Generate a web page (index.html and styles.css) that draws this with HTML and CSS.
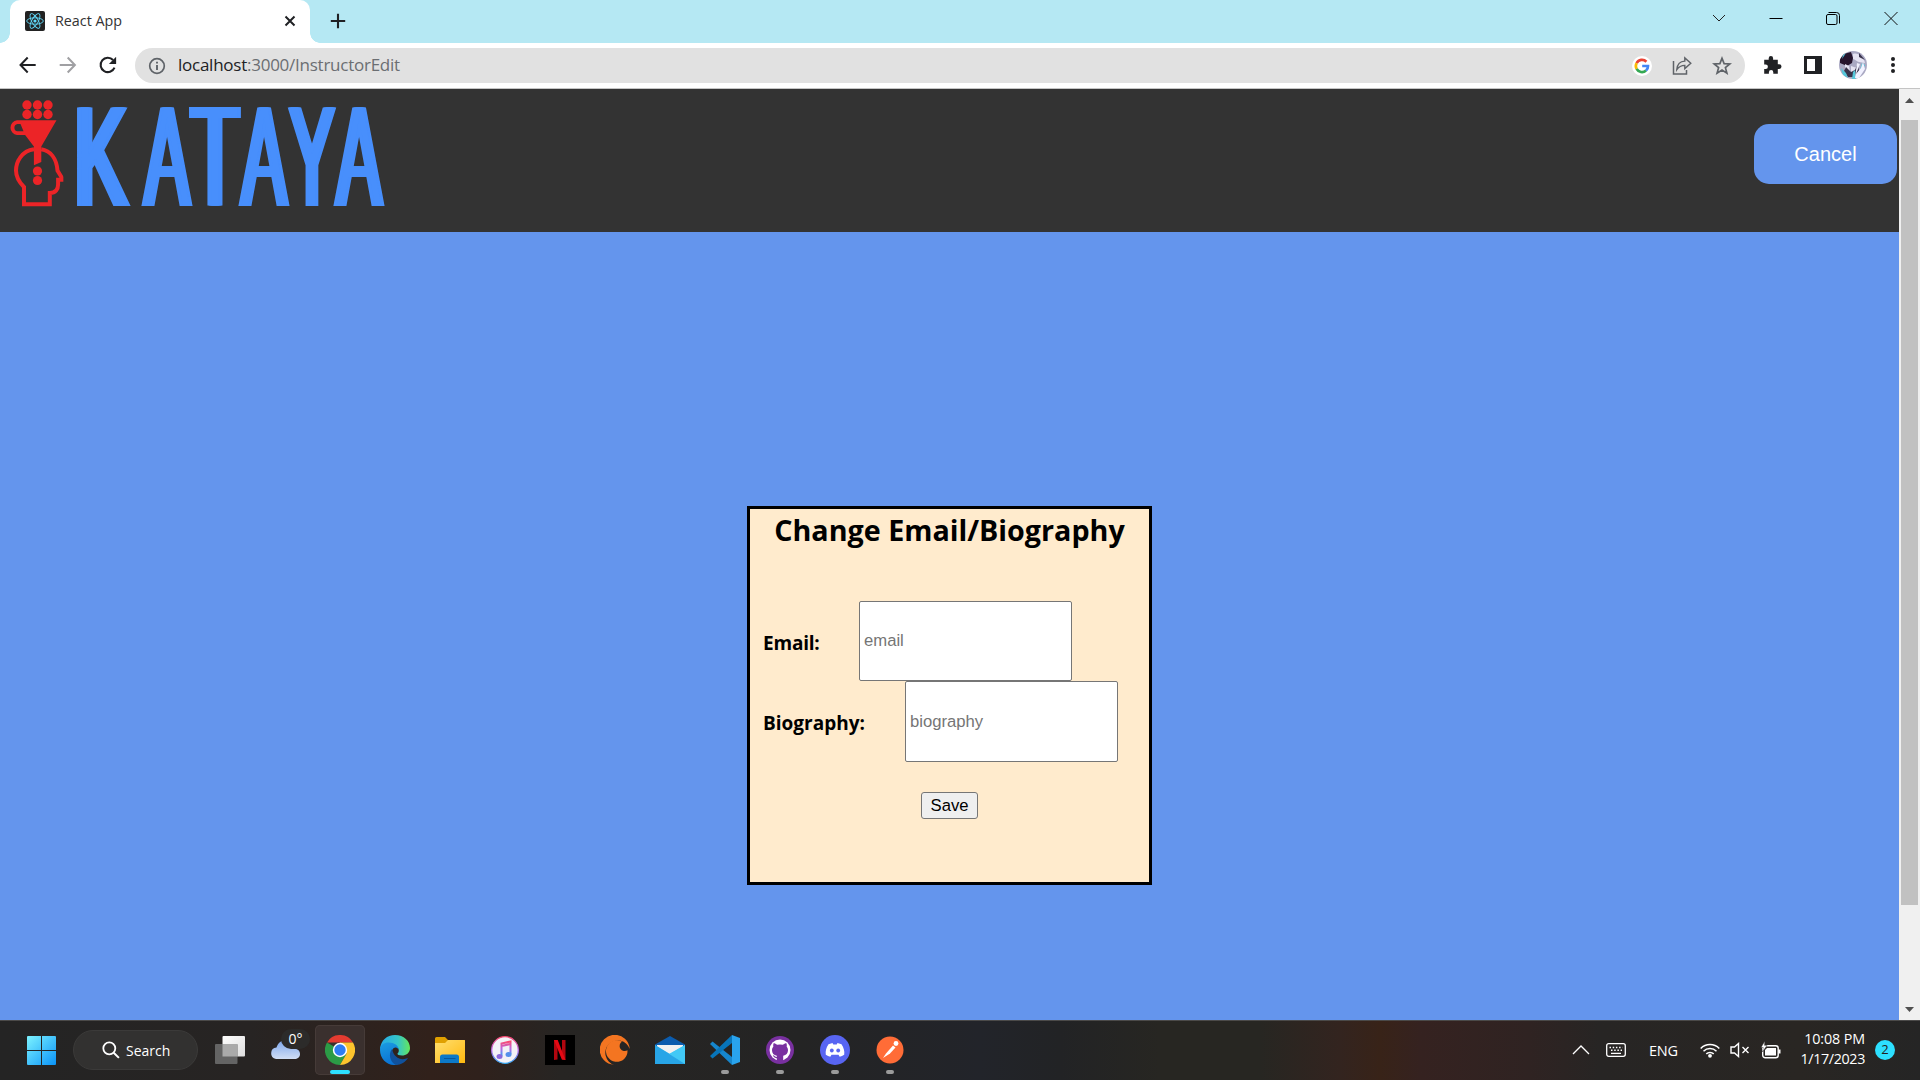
FILE: index.html
```html
<!DOCTYPE html>
<html lang="en">
<head>
<meta charset="utf-8">
<title>React App</title>
<link rel="stylesheet" href="styles.css">
</head>
<body>
<div class="desktop">
  <div class="tabstrip">
    <div class="tab">
      <svg class="favicon" viewBox="0 0 20 20"><rect width="20" height="20" rx="2" fill="#222"/><g fill="none" stroke="#61dafb" stroke-width=".9"><ellipse cx="10" cy="10" rx="8.3" ry="3.2"/><ellipse cx="10" cy="10" rx="8.3" ry="3.2" transform="rotate(60 10 10)"/><ellipse cx="10" cy="10" rx="8.3" ry="3.2" transform="rotate(120 10 10)"/></g><circle cx="10" cy="10" r="1.6" fill="#61dafb"/></svg>
      <span class="tab-title">React App</span>
      <svg class="tab-close" viewBox="0 0 12 12"><path d="M1.5 1.5l9 9M10.5 1.5l-9 9" stroke="#202124" stroke-width="2"/></svg>
    </div>
    <svg class="new-tab" viewBox="0 0 16 16"><path d="M8 .8v14.4M.8 8h14.4" stroke="#202124" stroke-width="2.1"/></svg>
    <div class="window-controls">
      <svg viewBox="0 0 16 16"><path d="M2 5l6 6 6-6" fill="none" stroke="#222" stroke-width="1"/></svg>
      <svg viewBox="0 0 16 16"><path d="M1.5 8.5h13" stroke="#000" stroke-width="1"/></svg>
      <svg viewBox="0 0 16 16"><rect x="1.5" y="4.5" width="10.5" height="10" rx="1.5" fill="none" stroke="#000"/><path d="M3.5 2.5h8a3 3 0 0 1 3 3v8" fill="none" stroke="#000"/></svg>
      <svg viewBox="0 0 16 16"><path d="M1.5 2l13 13M14.5 2l-13 13" stroke="#111" stroke-width="1"/></svg>
    </div>
  </div>

  <div class="toolbar">
    <div class="nav">
      <svg viewBox="0 0 20 20"><path d="M18 10H3M10 2.5L2.8 10l7.2 7.5" fill="none" stroke="#202124" stroke-width="2"/></svg>
      <svg viewBox="0 0 20 20"><path d="M2 10h15M10 2.5l7.2 7.5-7.2 7.5" fill="none" stroke="#a0a0a3" stroke-width="2"/></svg>
      <svg viewBox="0 0 20 20"><path d="M16.8 12.6A7.2 7.2 0 1 1 15.4 5" fill="none" stroke="#202124" stroke-width="2.1"/><path d="M18.4 1.8v7.2h-7.2z" fill="#202124"/></svg>
    </div>
    <div class="omnibox">
      <svg class="info" viewBox="0 0 18 18"><circle cx="9" cy="9" r="7.3" fill="none" stroke="#5f6368" stroke-width="1.7"/><path d="M9 8v5M9 4.8v1.8" stroke="#5f6368" stroke-width="1.9"/></svg>
      <span class="url"><span class="host">localhost</span>:3000/InstructorEdit</span>
      <div class="omni-actions">
        <svg viewBox="0 0 20 20"><circle cx="10" cy="10" r="10" fill="#fff"/><g fill="none" stroke-width="2.7"><path d="M14.4 5.7A6.1 6.1 0 0 0 4.6 7.1" stroke="#ea4335"/><path d="M4.6 7.1a6.1 6.1 0 0 0 0 5.8" stroke="#fbbc05"/><path d="M4.6 12.9a6.1 6.1 0 0 0 9.4 1.7" stroke="#34a853"/><path d="M14 14.6A6 6 0 0 0 16 10h-5.8" stroke="#4285f4"/></g></svg>
        <svg viewBox="0 0 20 20"><path d="M1.5 5v13h13v-4" fill="none" stroke="#5f6368" stroke-width="1.5"/><path d="M4.8 13.6C5.2 8.5 8 5.3 12.8 5.1V1.9l6 5.4-6 5.3V9.4c-3.6 0-6 1.3-8 4.2z" fill="none" stroke="#5f6368" stroke-width="1.4"/></svg>
        <svg viewBox="0 0 20 20"><path d="M10 2.3l2.1 5.3 5.7.4-4.4 3.6 1.5 5.5-4.9-3.1-4.9 3.1 1.5-5.5L2.2 8l5.7-.4z" fill="none" stroke="#5f6368" stroke-width="1.7"/></svg>
      </div>
    </div>
    <div class="extensions">
      <svg viewBox="0 0 20 20"><path d="M1.2 4.8h4.5V3.3a2.2 2.2 0 0 1 4.4 0v1.5h4.7v4.5h1.4a2.3 2.3 0 0 1 0 4.6h-1.4v4.8h-4.5v-1.5a2.2 2.2 0 0 0-4.4 0v1.5H1.2v-4.8h1.5a2.2 2.2 0 0 0 0-4.4H1.2z" fill="#202124"/></svg>
      <svg viewBox="0 0 20 20"><path fill-rule="evenodd" d="M1 1h18v18H1zM4 4v12h8V4z" fill="#202124"/></svg>
      <svg class="avatar" viewBox="0 0 28 28"><defs><clipPath id="face"><circle cx="14" cy="14" r="14"/></clipPath></defs><g clip-path="url(#face)"><path fill="#aaa9c3" d="M0 0h28v28H0z"/><path fill="#26152d" d="M1 4L12 1l2 6-1 5-5 3-7-3z"/><path fill="#e5e3f2" d="M14 3c5-2 11 4 12 9l-6-1c-2 0-4-3-6-3zM6 13l4 2 1 6-5-3zM12 15l6 2-6 5z"/><path fill="#39334b" d="M7 16l5 5 4-2 3-7 1 8-4 6H9l-4-6zM20 2l6 7-6-3z"/><path fill="#54c7da" d="M2 17l5 5 2 5-5-3zM14 21l2-2 1 9h-4zM23 12l3 2-4 9-3 3zM4 4l3-2-4 6z"/><path fill="#f1f1ff" d="M18 12l3 1-4 10 5-6 2-6 2 7-6 9h-4z"/></g></svg>
      <svg viewBox="0 0 20 20"><g fill="#202124"><circle cx="10" cy="4" r="2"/><circle cx="10" cy="10" r="2"/><circle cx="10" cy="16" r="2"/></g></svg>
    </div>
  </div>

  <div class="viewport">
    <div class="page">
      <header class="site-header">
        <div class="brand">
          <svg class="brand-mark" viewBox="0 0 54 108"><g fill="#ec2427"><circle cx="17.5" cy="5" r="4.7"/><circle cx="28" cy="5" r="4.7"/><circle cx="38.5" cy="5" r="4.7"/><circle cx="17.5" cy="14.5" r="4.7"/><circle cx="28" cy="14.5" r="4.7"/><circle cx="38.5" cy="14.5" r="4.7"/><path d="M7 20.3h40L31.8 46.5V62l-7.4 3.2V46.5L15.6 35H7.5a7.4 7.4 0 0 1 0-14.7zM8 24a3.7 3.7 0 0 0 0 7.3h6L11 24z" fill-rule="evenodd"/><circle cx="28" cy="71" r="4.6"/><circle cx="28" cy="80.5" r="4.6"/></g><path d="M24.500 49.300C12 51 6.500 62 6.500 70.500c0 7 3.500 12 8 16.500v17.300h25.800V93c6 0 8.300-4 8.300-8.500V79.800h3.600v-2.300l-4.200-7c-1-12-7-19.800-16.300-21.200" fill="none" stroke="#ec2427" stroke-width="4"/></svg>
          <div class="wordmark" aria-label="KATAYA"><span class="glyph k">K</span><span class="glyph a">A</span><span class="glyph t">T</span><span class="glyph a2">A</span><span class="glyph y">Y</span><span class="glyph a3">A</span></div>
        </div>
        <button class="cancel">Cancel</button>
      </header>
      <main class="content">
        <form class="card">
          <h1>Change Email/Biography</h1>
          <div class="field"><label for="email">Email:</label><input id="email" placeholder="email"></div>
          <div class="field bio"><label for="bio">Biography:</label><input id="bio" placeholder="biography"></div>
          <button type="button" class="save">Save</button>
        </form>
      </main>
    </div>
    <div class="scrollbar">
      <svg viewBox="0 0 9 5"><path d="M0 5l4.5-5L9 5z" fill="#505050"/></svg>
      <div class="thumb"></div>
      <svg viewBox="0 0 9 5"><path d="M0 0l4.5 5L9 0z" fill="#505050"/></svg>
    </div>
  </div>

  <div class="taskbar">
    <svg class="start" viewBox="0 0 29 29"><defs><linearGradient id="win" x2="1" y2="1" gradientUnits="userSpaceOnUse" x1="0" y1="0" gradientTransform="scale(29)"><stop stop-color="#7df3ff"/><stop offset="1" stop-color="#0a93f8"/></linearGradient></defs><path fill="url(#win)" d="M1 0h13v14H0V1a1 1 0 0 1 1-1zM15 0h13a1 1 0 0 1 1 1v13H15zM0 15h14v14H1a1 1 0 0 1-1-1zM15 15h14v13a1 1 0 0 1-1 1H15z"/></svg>
    <div class="search">
      <svg viewBox="0 0 18 18"><circle cx="7.3" cy="7.3" r="6" fill="none" stroke="#fff" stroke-width="1.8"/><path d="M11.7 11.7l5.2 5.2" stroke="#fff" stroke-width="2"/></svg>
      <span>Search</span>
    </div>
    <div class="apps">
      <div class="app"><svg viewBox="0 0 30 30"><defs><linearGradient id="tv" x2="1" y2="1"><stop stop-color="#fff"/><stop offset="1" stop-color="#ddd"/></linearGradient></defs><rect x="7.5" y="1" width="22.5" height="20.5" rx="1" fill="url(#tv)"/><rect x="0" y="9" width="22.5" height="20" rx="1" fill="#646464"/><path d="M7.5 9h15v12.5h-15z" fill="#aaa"/></svg></div>
      <div class="app weather"><svg viewBox="0 0 30 30"><defs><linearGradient id="cloud" x2="0" y2="1"><stop stop-color="#7ea7ec"/><stop offset="1" stop-color="#d1def5"/></linearGradient></defs><path d="M6 24a5.8 5.8 0 0 1 .5-11.5C8 8 11 5.5 15 5.5c5 0 8 3.5 8.5 8 4 .2 6.5 2.2 6.5 5.4S27.500 24 24.500 24z" fill="url(#cloud)"/></svg><span class="temp">0°</span></div>
      <div class="app active"><svg viewBox="0 0 30 30"><path d="M2 7.500A15 15 0 0 1 28 7.500H15z" fill="#e43b30"/><path d="M2 7.500A15 15 0 0 0 15 30l6.500-11.200L15 15z" fill="#2b9b46"/><path d="M28 7.500A15 15 0 0 1 15 30l6.500-11.300L15 7.500z" fill="#fdc42d"/><circle cx="15" cy="15" r="7.200" fill="#fff"/><circle cx="15" cy="15" r="5.700" fill="#2e7df2"/></svg></div>
      <div class="app"><svg viewBox="0 0 30 30"><defs><linearGradient id="e1"><stop stop-color="#25a9e9"/><stop offset=".6" stop-color="#35c5c8"/><stop offset="1" stop-color="#65e75b"/></linearGradient><linearGradient id="e2" x2=".4" y2="1"><stop stop-color="#1b9de2"/><stop offset="1" stop-color="#0a72d4"/></linearGradient></defs><path d="M0 14C1 5 7 0 15 0c9 0 15 6 15 13 0 5-4 7.500-8 7.500-3 0-5-1-4.500-2 1.500-1.500 1.500-3 1-4.500C17 9 7 7 0 14z" fill="url(#e1)"/><path d="M0 15C0 10 4 7.500 8.500 7.500c6 0 10 3 10.200 7C15 10 11 14 12 19c1 4.500 5 7.500 10 7.500-2 2-4.500 3.500-8 3.500C6 30 0 23 0 15z" fill="url(#e2)"/><path d="M12 14c-4 5-2 13 4 16 5 0 9.500-3 12-7-7 3-14 0-16-9z" fill="#10519c"/></svg></div>
      <div class="app"><svg viewBox="0 0 30 30"><defs><linearGradient id="fold" x2="1" y2="1"><stop stop-color="#ffdf70"/><stop offset="1" stop-color="#ffb90f"/></linearGradient></defs><path d="M0 3.500A1.500 1.500 0 0 1 1.500 2H10l3 3h17v10H0z" fill="#e0a000"/><path d="M0 8h10l3-3h16a1 1 0 0 1 1 1v22H0z" fill="url(#fold)"/><path d="M5 28v-6a2.500 2.500 0 0 1 2.500-2.500h14A2.500 2.500 0 0 1 24 22v6z" fill="#0c79c8"/><path d="M9 23.500h11.500" stroke="#07579c"/></svg></div>
      <div class="app"><svg viewBox="0 0 30 30"><defs><linearGradient id="mus" x2="0" y2="1"><stop stop-color="#fb4a72"/><stop offset=".5" stop-color="#b966e6"/><stop offset="1" stop-color="#31a8f4"/></linearGradient></defs><circle cx="15" cy="15" r="13.300" fill="#f3f2f7" stroke="url(#mus)" stroke-width="1.300"/><path d="M11.500 21V8.500l9-2V19M11.500 11l9-2" fill="none" stroke="url(#mus)" stroke-width="2"/><ellipse cx="9.500" cy="21.500" rx="3" ry="2.500" fill="#8b68dc"/><ellipse cx="18.500" cy="19.500" rx="3" ry="2.500" fill="#5590eb"/></svg></div>
      <div class="app"><svg viewBox="0 0 30 30"><path d="M0 0h30v30H0z"/><path d="M9 5h3.500v19.500L9 25zM17 5h3.500v20l-3.500-.5z" fill="#b1060f"/><path d="M9 5h3.700l7.800 20-3.700-.4z" fill="#e50914"/></svg></div>
      <div class="app"><svg viewBox="0 0 30 30"><path d="M14 29.800A15 15 0 1 1 29.700 14 12.500 12.500 0 1 0 14 29.800z" fill="#f47521"/><path d="M22 6.600a4.500 4.500 0 0 0 5.500 8.700A10.800 10.800 0 1 1 22 6.600z" fill="#f47521"/></svg></div>
      <div class="app"><svg viewBox="0 0 30 30"><path d="M0 9.500L15 1l15 8.500V15H0z" fill="#0b5cae"/><path d="M2 10h26v10H2z" fill="#f1f1f1"/><path d="M0 10l15 9 15-9v19H0z" fill="#39b9f1"/><path d="M30 10L13 19.500 28 29h2z" fill="#42c9f6"/><path d="M0 10l30 19H0z" fill="#28a5e7"/></svg></div>
      <div class="app running"><svg viewBox="0 0 30 30"><path d="M0 9l2.500-2.500L22 22v8z" fill="#1686cd"/><path d="M0 21l2.500 2.500L22 8V0z" fill="#0875ba"/><path d="M22 0l8 3v24l-8 3z" fill="#29a3ed"/></svg></div>
      <div class="app running"><svg viewBox="0 0 30 30"><circle cx="15" cy="15" r="14" fill="#7930a0"/><circle cx="15" cy="15" r="10.500" fill="#fff"/><path d="M11.800 26v-5.200c-3-.5-4.800-2.500-4.800-5.500 0-1.400.5-2.600 1.300-3.500-.3-1.300-.1-2.500.3-3.500 1.300 0 2.500.7 3.500 1.500a13 13 0 0 1 5.800 0c1-.8 2.200-1.500 3.500-1.500.4 1 .6 2.200.3 3.500.8.900 1.300 2.100 1.300 3.500 0 3-1.800 5-4.800 5.500V26z" fill="#7930a0"/><path d="M12.300 22.500c-2 .5-3-.5-4-2" fill="none" stroke="#7930a0" stroke-width="1.200"/></svg></div>
      <div class="app running"><svg viewBox="0 0 30 30"><circle cx="15" cy="15" r="15" fill="#5865f2"/><path d="M8.500 9.300l4-1.300.8 1.400h3.400l.8-1.400 4 1.300c2.200 3.300 3.300 6.900 2.700 10.500-1.500 1.100-3 1.700-4.500 2l-1.200-2h-7l-1.200 2c-1.500-.3-3-1-4.500-2-.5-3.600.4-7.200 2.700-10.500z" fill="#fff"/><circle cx="11.800" cy="15.500" r="1.900" fill="#5865f2"/><circle cx="18.200" cy="15.500" r="1.900" fill="#5865f2"/></svg></div>
      <div class="app running"><svg viewBox="0 0 30 30"><circle cx="15" cy="15" r="13.500" fill="#ff6c37"/><circle cx="21" cy="8.500" r="2.400" fill="#fff"/><path d="M18 10.500l2.500 2-5.500 6-7 4.500 3-4.500z" fill="#fff"/></svg></div>
    </div>
    <div class="tray">
      <svg class="chev" viewBox="0 0 18 18"><path d="M1 13l8-8 8 8" fill="none" stroke="#fff" stroke-width="1.300"/></svg>
      <svg class="kbd" viewBox="0 0 20 14"><rect x=".7" y=".7" width="18.600" height="12.600" rx="2" fill="none" stroke="#fff" stroke-width="1.300"/><path d="M3.500 4.500h13M5 7.300h11" stroke="#fff" stroke-width="1.500" stroke-dasharray="1.500 1.700"/><path d="M5 10.400h10" stroke="#fff" stroke-width="1.300"/></svg>
      <span class="lang">ENG</span>
      <svg class="wifi" viewBox="0 0 20 16"><g fill="none" stroke="#fff" stroke-width="1.500"><path d="M.7 6.500a13 13 0 0 1 18.600 0M3.500 9.300a9.200 9.200 0 0 1 13 0M6.300 11.900a5.300 5.300 0 0 1 7.400 0"/></g><circle cx="10" cy="13.800" r="1.900" fill="#fff"/></svg>
      <svg class="vol" viewBox="0 0 20 16"><path d="M1 5h3.500L8.500 1.500v13L4.500 11H1z" fill="none" stroke="#fff" stroke-width="1.400"/><path d="M12.500 5l6 6M18.500 5l-6 6" stroke="#fff" stroke-width="1.400"/></svg>
      <svg class="batt" viewBox="0 0 20 18"><rect x="1.700" y="4.700" width="15.500" height="12" rx="2.500" fill="none" stroke="#fff" stroke-width="1.400"/><path d="M4 9l2-2h9v7.500H4zM17.500 8.500h2v4h-2z" fill="#fff"/><path d="M3.800 0L0 6.500h2.200L1.500 11l4.500-6.500H3.600z" fill="#fff" stroke="#272524" stroke-width=".5"/></svg>
      <div class="clock"><span class="time">10:08 PM</span><span class="date">1/17/2023</span></div>
      <span class="badge">2</span>
    </div>
  </div>
</div>
</body>
</html>
```
FILE: styles.css
```css
* { box-sizing: border-box; }
body { margin: 0; overflow: hidden; font-family: "Open Sans", "Noto Sans", sans-serif; }
svg { display: block; flex: none; }
.desktop { width: 1920px; height: 1080px; display: flex; flex-direction: column; }

/* browser frame */
.tabstrip { height: 43px; background: #b5e8f3; display: flex; padding-left: 10px; align-items: stretch; }
.tab { position: relative; width: 300px; background: #fff; border-radius: 10px 10px 0 0; display: flex; align-items: center; padding: 0 14px 1px 15px; }
.tab::before, .tab::after { content: ""; position: absolute; bottom: 0; width: 10px; height: 10px; }
.tab::before { left: -10px; background: radial-gradient(circle at 0 0, transparent 9.5px, #fff 10px); }
.tab::after { right: -10px; background: radial-gradient(circle at 100% 0, transparent 9.5px, #fff 10px); }
.favicon { width: 20px; height: 20px; }
.tab-title { margin: 0 0 2px 10px; font-size: 14.3px; color: #333; }
.tab-close { width: 12px; height: 12px; margin-left: auto; }
.new-tab { width: 16px; height: 16px; margin: 13px 0 0 19.5px; }
.window-controls { margin: 10px 21px 0 auto; display: flex; gap: 41px; }
.window-controls svg { width: 16px; height: 16px; }
.window-controls svg:nth-child(3) { margin-right: 1px; }
.toolbar { height: 46px; background: #fff; border-bottom: 1px solid #c4c4c4; display: flex; align-items: center; padding: 0 17px 1px; }
.nav { display: flex; gap: 20px; }
.nav svg { width: 20px; height: 20px; transform: translateX(.7px); }
.omnibox { width: 1610px; height: 35px; margin-left: 18px; border-radius: 18px; background: #e1e1e1; display: flex; align-items: center; padding: 0 13px; margin-top: 1px; }
.info { width: 18px; height: 18px; }
.url { margin: 0 0 2px 12px; font-size: 17px; letter-spacing: -.25px; color: #6b6e72; }
.host { color: #202124; }
.omni-actions { margin-left: auto; display: flex; gap: 20px; }
.omni-actions svg { width: 20px; height: 20px; }
.extensions { display: flex; align-items: center; gap: 20px; margin-left: 18px; }
.extensions svg { width: 20px; height: 20px; }
.extensions .avatar { width: 28px; height: 28px; margin: 0 -4px; }

/* page */
.viewport { height: 931px; display: flex; }
.page { width: 1899px; display: flex; flex-direction: column; background: #6495ed; }
.site-header { height: 143px; background: #333; display: flex; justify-content: space-between; padding-right: 2px; }
.brand { display: flex; padding: 11px 0 0 10px; }
.brand-mark { width: 54px; height: 108px; transform: translateX(-.5px); }
.wordmark { display: flex; height: 98px; margin: 8px 0 0 13px; color: #488ffc; font: 142px/98px "Liberation Sans", sans-serif; }
.glyph { width: 52px; display: flex; justify-content: center; text-shadow: -7px 0, -5px 0, -3px 0, -1px 0, 1px 0, 3px 0, 5px 0, 7px 0; transform: scaleX(.475); }
.k { transform: translateX(-2px) scaleX(.56); }
.a { margin-left: 12px; }
.t { margin-left: -4.5px; transform: scaleX(.55); }
.a2 { margin-left: -2.5px; }
.y { margin-left: -4px; }
.a3 { margin-left: -5.5px; }
.cancel { width: 143px; height: 60px; margin-top: 35px; border: 0; border-radius: 15px; background: #6495ed; color: #fff; font: 20px "Liberation Sans", sans-serif; padding: 0; }
.content { display: flex; justify-content: center; padding-top: 274px; }
.card { width: 405px; height: 379px; background: #ffebcd; border: 3px solid #000; display: flex; flex-direction: column; padding-left: 13px; }
.card h1 { margin: 0 13px 0 0; height: 92px; line-height: 42px; text-align: center; font-size: 28.7px; font-weight: 700; white-space: nowrap; }
.field { height: 80px; display: flex; align-items: center; gap: 40px; }
.field label { width: 56px; font-size: 19px; font-weight: 700; letter-spacing: -.2px; padding-top: 3px; white-space: nowrap; }
.bio label { width: 102px; letter-spacing: 0; }
.field input { width: 213px; height: 80px; border: 1px solid #767676; border-radius: 2px; padding: 1px 4px; background: #fff; font: 16.667px "Liberation Sans", sans-serif; }
.bio { height: 81px; }
.bio input { height: 81px; }
.field input::placeholder { color: #757575; }
.save { width: 57px; height: 27px; margin: 30px 13px 0 0; align-self: center; border: 1px solid #767676; border-radius: 3px; background: #efefef; color: #000; padding: 0; font: 16.667px "Liberation Sans", sans-serif; }
.scrollbar { width: 21px; background: #f0f0f0; display: flex; flex-direction: column; align-items: center; padding: 9px 0 8px; }
.scrollbar svg { width: 9px; height: 5px; }
.thumb { width: 17px; height: 785px; margin: 17px 0 auto; background: #c1c1c1; }

/* taskbar */
.taskbar { height: 60px; border-top: 1px solid #4b4a49; display: flex; align-items: center; color: #fff; padding: 0 25px 1px 27px; background: linear-gradient(90deg, #242424 0, #272423 250px, #31211b 430px, #2f211c 480px, #272523 560px, #242424 800px, #22242a 980px, #222325 1060px, #272622 1160px, #272622 1260px, #33241f 1340px, #382318 1380px, #352220 1420px, #2f2322 1530px, #272524 1600px, #292623 1800px, #252525 1920px); }
.start { width: 29px; height: 29px; }
.search { width: 125px; height: 40px; margin-left: 17px; border-radius: 20px; background: #323130; border: 1px solid #3b3a39; display: flex; align-items: center; padding-left: 28px; gap: 6px; font-size: 14px; }
.search svg { width: 18px; height: 18px; }
.apps { display: flex; margin-left: 4.5px; }
.app { position: relative; width: 50px; height: 50px; margin: 0 2.5px; border-radius: 5px; display: flex; align-items: center; justify-content: center; }
.app svg { width: 30px; height: 30px; }
.active { background: #3a302e; box-shadow: inset 0 0 0 1px #463b38; }
.active::after, .running::after { content: ""; position: absolute; bottom: 1px; width: 20px; height: 4px; border-radius: 2px; background: #2de0ff; }
.running::after { width: 8px; background: #9b9b9b; }
.temp { position: absolute; left: 21px; top: 4px; width: 29px; height: 20px; border-radius: 10px; background: #2c2b2a; text-align: center; font-size: 14px; line-height: 19px; }
.tray { margin-left: auto; display: flex; align-items: center; }
.chev { width: 18px; height: 18px; }
.kbd { width: 20px; height: 14px; margin-left: 16px; }
.lang { width: 29px; margin-left: 23px; font-size: 14.5px; letter-spacing: -.2px; }
.wifi { width: 20px; height: 16px; margin-left: 22px; }
.vol { width: 20px; height: 16px; margin-left: 10px; }
.batt { width: 20px; height: 18px; margin-left: 11px; }
.clock { width: 74px; margin: 0 0 3px 10px; display: flex; flex-direction: column; align-items: flex-end; font-size: 14.3px; line-height: 20px; white-space: nowrap; }
.time { letter-spacing: -.1px; }
.date { letter-spacing: -.35px; }
.badge { width: 20px; height: 20px; margin-left: 10px; border-radius: 50%; background: #2de0ff; color: #222; text-align: center; font-size: 13px; line-height: 19px; }
```
